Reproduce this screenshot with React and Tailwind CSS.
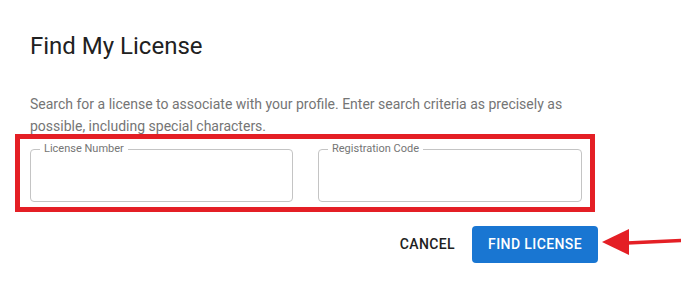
import React from "react";

const OutlinedField = ({ label, width }) => (
  <div className={`relative h-[53px] ${width} rounded-[4px] border border-[#c4c4c4]`}>
    <span className="absolute -top-[8px] left-[9px] bg-white px-[4px] text-[11px] leading-[14px] text-[#757575]">
      {label}
    </span>
  </div>
);

const App = () => {
  return (
    <div
      className="relative h-[281px] w-[681px] overflow-hidden bg-white"
      style={{ fontFamily: "Roboto, 'Liberation Sans', sans-serif" }}
    >
      <div className="pt-[30px]">
        <h2 className="pl-[30px] text-[24px] leading-[32px] font-normal text-[#212121]">
          Find My License
        </h2>

        <p className="mt-[31px] w-[600px] pl-[30px] text-[14px] leading-[22px] text-[#757575]">
          Search for a license to associate with your profile. Enter search criteria as precisely as
          possible, including special characters.
        </p>

        {/* highlight box */}
        <div className="-mt-[3px] ml-[15px] flex h-[78px] w-[580px] gap-[25px] border-[5px] border-[#e41f25] pl-[10px] pt-[10px]">
          <OutlinedField label="License Number" width="w-[263px]" />
          <OutlinedField label="Registration Code" width="w-[264px]" />
        </div>

        <div className="mt-[14px] flex items-center justify-end gap-[9px] pr-[83px]">
          <button className="h-[37px] px-[8px] text-[14px] font-medium tracking-[0.4px] text-[#212121]">
            CANCEL
          </button>
          <button className="h-[37px] rounded-[4px] bg-[#1976d2] px-[16px] text-[14px] font-medium tracking-[0.4px] text-white">
            FIND LICENSE
          </button>
        </div>
      </div>

      {/* annotation arrow */}
      <svg className="absolute left-[600px] top-[226px]" width="81" height="32" viewBox="0 0 81 32">
        <polygon points="2,16 29,3 29,29" fill="#e41f25" />
        <line x1="27" y1="17" x2="81" y2="14.5" stroke="#e41f25" strokeWidth="3.5" />
      </svg>
    </div>
  );
};

export default App;
